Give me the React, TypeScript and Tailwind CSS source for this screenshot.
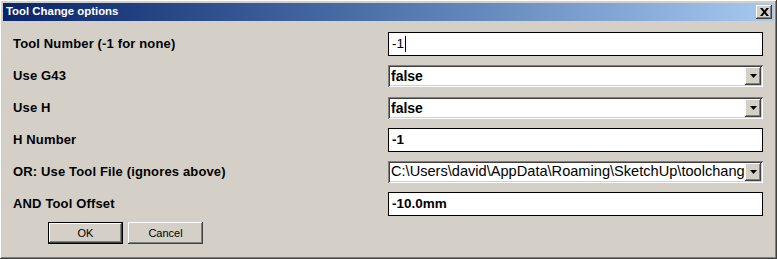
import { ReactNode } from "react";

const raised =
  "bg-[#d4d0c8] shadow-[inset_-1px_-1px_#404040,inset_1px_1px_#ffffff,inset_-2px_-2px_#808080,inset_2px_2px_#d4d0c8]";
const sunken =
  "shadow-[inset_1px_1px_#808080,inset_-1px_-1px_#ffffff,inset_2px_2px_#404040,inset_-2px_-2px_#d4d0c8]";

function TextBox({ children }: { children: ReactNode }) {
  return (
    <div className="flex h-[24px] w-full items-center border border-black bg-white pl-[3px] text-[13.5px] font-bold text-black">
      {children}
    </div>
  );
}

function Combo({ value, bold = true }: { value: string; bold?: boolean }) {
  return (
    <div className={`flex h-[22px] w-full items-center bg-white p-[2px] ${sunken}`}>
      <div
        className={`min-w-0 flex-1 overflow-hidden whitespace-nowrap pl-[1px] text-black ${
          bold ? "text-[14px] font-bold" : "text-[14.6px] font-normal"
        }`}
      >
        {value}
      </div>
      <div className={`flex h-[18px] w-[16px] shrink-0 items-center justify-center ${raised}`}>
        <svg width="7" height="4" viewBox="0 0 7 4">
          <path d="M0 0h7L3.5 4z" fill="#000" />
        </svg>
      </div>
    </div>
  );
}

function Row({ label, children }: { label: string; children: ReactNode }) {
  return (
    <div className="flex h-[32px] items-center">
      <div className="w-[375px] shrink-0 text-[13px] font-bold tracking-[0.15px] text-black">{label}</div>
      <div className="min-w-0 flex-1">{children}</div>
    </div>
  );
}

function Button({ label, isDefault = false }: { label: string; isDefault?: boolean }) {
  return (
    <div
      className={`flex h-[22px] w-[75px] items-center justify-center text-[11px] text-black ${
        isDefault ? "border border-black" : ""
      }`}
    >
      <div className={`flex h-full w-full items-center justify-center ${raised}`}>{label}</div>
    </div>
  );
}

export default function App() {
  return (
    <div
      className={`flex h-[259px] w-[777px] flex-col p-[3px] ${raised}`}
      style={{ fontFamily: '"Liberation Sans", Arial, sans-serif' }}
    >
      <div className="flex h-[18px] shrink-0 items-center justify-between bg-gradient-to-r from-[#0a246a] to-[#a6caf0] pl-[3px] pr-[2px]">
        <span className="text-[11.4px] font-bold text-white">Tool Change options</span>
        <div className={`flex h-[14px] w-[16px] items-center justify-center ${raised}`}>
          <svg width="9" height="8" viewBox="0 0 9 8">
            <path d="M0 0h2.5l2 2.6 2-2.6H9L5.8 4 9 8H6.5l-2-2.6-2 2.6H0l3.2-4z" fill="#000" />
          </svg>
        </div>
      </div>
      <div className="flex flex-1 flex-col pl-[10px] pr-[11px] pt-[7px]">
        <Row label="Tool Number (-1 for none)">
          <TextBox>
            <span className="font-normal">-1</span>
            <span className="ml-[1px] h-[16px] w-[1px] bg-black" />
          </TextBox>
        </Row>
        <Row label="Use G43">
          <Combo value="false" />
        </Row>
        <Row label="Use H">
          <Combo value="false" />
        </Row>
        <Row label="H Number">
          <TextBox>-1</TextBox>
        </Row>
        <Row label="OR: Use Tool File (ignores above)">
          <Combo value="C:\Users\david\AppData\Roaming\SketchUp\toolchange.csv" bold={false} />
        </Row>
        <Row label="AND Tool Offset">
          <TextBox>-10.0mm</TextBox>
        </Row>
        <div className="mt-[2px] flex gap-[5px] pl-[35px]">
          <Button label="OK" isDefault />
          <Button label="Cancel" />
        </div>
      </div>
    </div>
  );
}
